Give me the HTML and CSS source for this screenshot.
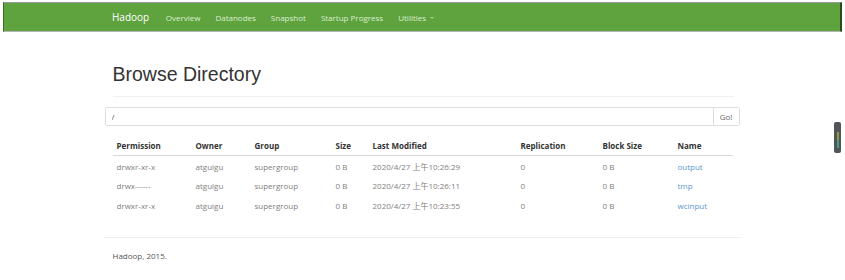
FILE: index.html
```html
<!DOCTYPE html>
<html lang="en">
<head>
  <meta charset="UTF-8" />
  <title>Browsing HDFS</title>
  <link rel="stylesheet" href="styles.css">
</head>
<body>

  <header class="navbar">
    <div class="container nav-inner">
      <a class="brand" href="#">Hadoop</a>
      <ul class="nav-links">
        <li><a href="#">Overview</a></li>
        <li><a href="#">Datanodes</a></li>
        <li><a href="#">Snapshot</a></li>
        <li><a href="#">Startup Progress</a></li>
        <li><a href="#">Utilities <span class="caret"></span></a></li>
      </ul>
    </div>
  </header>

  <div class="container">
    <div class="page-header">
      <h1>Browse Directory</h1>
    </div>

    <div class="input-group">
      <input class="path-input" type="text" value="/">
      <button class="go-btn">Go!</button>
    </div>

    <table class="listing">
      <colgroup>
        <col style="width:79px"><col style="width:59px"><col style="width:81px"><col style="width:37px">
        <col style="width:148px"><col style="width:82px"><col style="width:75px"><col style="width:59px">
      </colgroup>
      <thead>
        <tr>
          <th>Permission</th><th>Owner</th><th>Group</th><th>Size</th>
          <th>Last Modified</th><th>Replication</th><th>Block Size</th><th>Name</th>
        </tr>
      </thead>
      <tbody>
        <tr>
          <td>drwxr-xr-x</td><td>atguigu</td><td>supergroup</td><td>0 B</td>
          <td>2020/4/27 上午10:26:29</td><td>0</td><td>0 B</td><td><a href="#">output</a></td>
        </tr>
        <tr>
          <td>drwx------</td><td>atguigu</td><td>supergroup</td><td>0 B</td>
          <td>2020/4/27 上午10:26:11</td><td>0</td><td>0 B</td><td><a href="#">tmp</a></td>
        </tr>
        <tr>
          <td>drwxr-xr-x</td><td>atguigu</td><td>supergroup</td><td>0 B</td>
          <td>2020/4/27 上午10:23:55</td><td>0</td><td>0 B</td><td><a href="#">wcinput</a></td>
        </tr>
      </tbody>
    </table>

    <footer class="footer">
      <p>Hadoop, 2015.</p>
    </footer>
  </div>

  <div class="side-widget">
    <span class="seg yellow"></span>
    <span class="seg green"></span>
  </div>

</body>
</html>
```

FILE: styles.css
```css
* { box-sizing: border-box; margin: 0; padding: 0; }
body {
  font-family: "Open Sans", "Noto Sans CJK SC", sans-serif;
  font-size: 8px;
  background-color: #fff;
  color: #808080;
}
.container {
  width: 638px;
  margin: 0 auto;
}
.navbar {
  margin: 2px 3px 0 3px;
  height: 30px;
  background-color: #5fa33e;
  border-top: 1px solid #9a9a9a;
  border-bottom: 1px solid #b5b5b5;
  border-left: 1px solid #3b6e27;
  border-right: 2px solid #2c4a20;
}
.nav-inner {
  display: flex;
  align-items: center;
  height: 28px;
  padding-left: 9px;
}
.brand {
  font-size: 10px;
  color: #fff;
  text-decoration: none;
  margin-right: 9px;
}
.nav-links {
  display: flex;
  list-style: none;
}
.nav-links a {
  display: block;
  padding: 0 7.5px;
  color: #dbeed2;
  text-decoration: none;
}
.caret {
  display: inline-block;
  width: 0;
  height: 0;
  margin-left: 2px;
  vertical-align: middle;
  border-top: 2px solid #a9cf95;
  border-left: 2px solid transparent;
  border-right: 2px solid transparent;
}
.page-header {
  margin: 32px 8px 0 9px;
  padding-bottom: 10px;
  border-bottom: 1px solid #f0f0f0;
}
h1 {
  font-family: "Liberation Sans", Arial, sans-serif;
  font-size: 19.5px;
  font-weight: normal;
  line-height: 21.5px;
  color: #333;
}
.input-group {
  display: flex;
  height: 19px;
  margin: 10px 2px 0 1px;
  border: 1px solid #ddd;
  border-radius: 2px;
}
.path-input {
  flex: 1;
  border: none;
  padding-left: 6px;
  font-family: inherit;
  font-size: 8px;
  color: #555;
  outline: none;
}
.go-btn {
  width: 26px;
  border: none;
  border-left: 1px solid #ddd;
  background-color: #fff;
  font-family: inherit;
  font-size: 8px;
  color: #666;
}
.listing {
  margin: 10px 0 0 9px;
  width: 620px;
  table-layout: fixed;
  border-collapse: collapse;
}
.listing th,
.listing td {
  height: 20px;
  padding: 0 4px;
  text-align: left;
  white-space: nowrap;
}
.listing th {
  color: #333;
  font-weight: bold;
  border-bottom: 1px solid #d9d9d9;
}
.listing tbody tr:first-child td { padding-top: 1px; }
.listing td a {
  color: #5b95cf;
  text-decoration: none;
}
.footer {
  margin-top: 21px;
  border-top: 1px solid #f0f0f0;
  padding: 12px 0 0 9px;
  color: #555;
}
.side-widget {
  position: absolute;
  left: 834px;
  top: 122px;
  width: 7px;
  height: 31px;
  background-color: #50555a;
  border-radius: 2px;
  display: flex;
  flex-direction: column;
  align-items: center;
  padding-top: 10px;
}
.seg {
  width: 2px;
  height: 8px;
}
.yellow { background-color: #8f9a45; }
.green { background-color: #4c9a7c; }
```
